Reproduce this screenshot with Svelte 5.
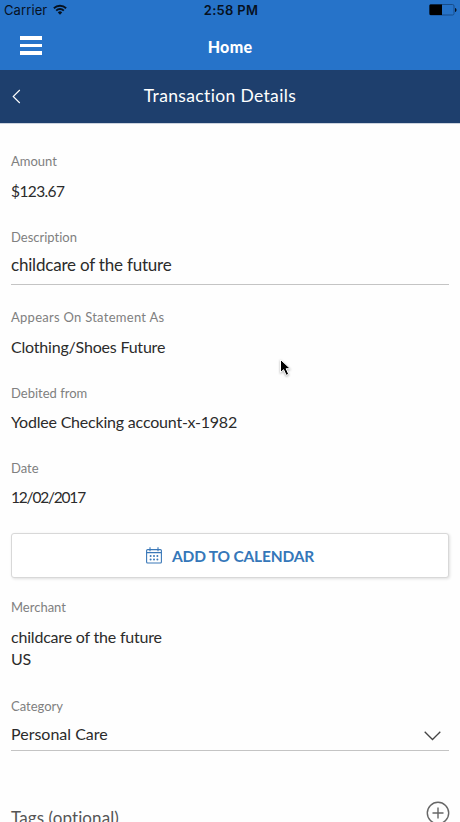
<script lang="ts">
  let description = 'childcare of the future';
  const transaction = {
    amount: '$123.67',
    statementName: 'Clothing/Shoes Future',
    account: 'Yodlee Checking account-x-1982',
    date: '12/02/2017',
    merchant: 'childcare of the future',
    country: 'US',
    category: 'Personal Care'
  };

  const dotRows = [9, 12.4];
  const dotCols = [4.6, 8, 11.4];
</script>

<div class="screen">
  <div class="status-bar">
    <div class="carrier">
      <span>Carrier</span>
      <svg width="14" height="11" viewBox="0 0 14 11" fill="none" stroke="#06111f" stroke-width="1.9">
        <path d="M0.9 4.2a8.7 8.7 0 0 1 12.2 0" />
        <path d="M3.2 6.6a5.4 5.4 0 0 1 7.6 0" />
        <path d="M7 10.7L4.8 8.4a3.1 3.1 0 0 1 4.4 0z" fill="#06111f" stroke="none" />
      </svg>
    </div>
    <span class="clock">2:58 PM</span>
    <svg class="battery" width="28" height="12" viewBox="0 0 28 12">
      <rect x="0.5" y="0.5" width="24.5" height="10.5" rx="1.5" fill="none" stroke="#174d8b" />
      <path d="M1.5 0.5H13V11H1.5a1 1 0 0 1-1-1V1.5a1 1 0 0 1 1-1z" fill="#000" />
      <path d="M26 4v4c1-.3 1.5-1 1.5-2S27 4.3 26 4z" fill="#06111f" />
    </svg>
  </div>

  <header class="nav-bar">
    <button class="menu-btn" aria-label="Menu">
      <span></span>
      <span></span>
      <span></span>
    </button>
    <h1>Home</h1>
  </header>

  <div class="title-bar">
    <button class="back-btn" aria-label="Back">
      <svg width="9" height="15" viewBox="0 0 9 15" fill="none" stroke="#fff" stroke-width="1.1">
        <path d="M7.8 1L1.2 7.5L7.8 14" />
      </svg>
    </button>
    <h2>Transaction Details</h2>
  </div>

  <main class="details">
    <div class="field total">
      <span class="label">Amount</span>
      <span class="value amount">{transaction.amount}</span>
    </div>

    <div class="field editable">
      <span class="label">Description</span>
      <span class="value description">{description}</span>
    </div>

    <div class="field statement">
      <span class="label">Appears On Statement As</span>
      <span class="value">{transaction.statementName}</span>
    </div>

    <div class="field">
      <span class="label">Debited from</span>
      <span class="value">{transaction.account}</span>
    </div>

    <div class="field">
      <span class="label">Date</span>
      <span class="value date">{transaction.date}</span>
    </div>

    <button class="calendar-btn">
      <svg width="16" height="17" viewBox="0 0 16 17" fill="none" stroke="#3a78b8" stroke-width="1.1">
        <rect x="0.6" y="2.6" width="14.8" height="13.4" rx="1" />
        <path d="M0.6 5.6H15.4M4 0.3V4.3M12 0.3V4.3" />
        {#each dotRows as cy}
          {#each dotCols as cx}
            <circle {cx} {cy} r="1" fill="#3a78b8" stroke="none" />
          {/each}
        {/each}
      </svg>
      <span>ADD TO CALENDAR</span>
    </button>

    <div class="field merchant">
      <span class="label">Merchant</span>
      <span class="value">{transaction.merchant}</span>
      <span class="value country">{transaction.country}</span>
    </div>

    <div class="field select">
      <span class="label">Category</span>
      <div class="select-row">
        <span class="value category">{transaction.category}</span>
        <svg width="17" height="10" viewBox="0 0 17 10" fill="none" stroke="#444" stroke-width="1.3">
          <path d="M0.7 0.8L8.5 8.5L16.3 0.8" />
        </svg>
      </div>
    </div>

    <div class="tags">
      <span>Tags (optional)</span>
      <button class="add-btn" aria-label="Add tag">
        <svg width="24" height="24" viewBox="0 0 24 24" fill="none" stroke="#666" stroke-width="1.4">
          <circle cx="12" cy="12" r="10.7" />
          <path d="M12 6.5V17.5M6.5 12H17.5" />
        </svg>
      </button>
    </div>
  </main>

  <svg class="pointer" width="14" height="20" viewBox="0 0 14 20">
    <path d="M1.5 1.5V14.5L4.6 11.7L7.2 17.3L9.7 16.2L7.2 10.7H11.3z" fill="#000" stroke="#fff" />
  </svg>
</div>

<style>
  :global(body) {
    margin: 0;
    background: #fff;
  }

  .screen {
    position: relative;
    width: 460px;
    height: 822px;
    overflow: hidden;
    background: #fefefe;
    color: #2b2b2b;
    font-family: Lato, 'Open Sans', sans-serif;
    font-variant-ligatures: none;
  }

  button {
    padding: 0;
    border: none;
    background: none;
    font-family: inherit;
    cursor: pointer;
  }

  svg {
    display: block;
  }

  .status-bar {
    display: grid;
    grid-template-columns: 1fr auto 1fr;
    align-items: center;
    height: 20px;
    padding: 0 3px 0 4px;
    background: #2673c9;
    color: #06111f;
    font-family: Inter, Roboto, sans-serif;
    font-size: 13px;
  }

  .carrier {
    display: flex;
    align-items: center;
    gap: 6px;
    letter-spacing: 0.1px;
  }

  .carrier svg {
    margin-top: -2px;
  }

  .clock {
    padding-left: 1px;
    font-weight: 600;
    letter-spacing: 0.3px;
  }

  .battery {
    justify-self: end;
  }

  .nav-bar,
  .title-bar {
    display: grid;
    grid-template-columns: 60px 1fr 60px;
    align-items: center;
    color: #fff;
  }

  .nav-bar {
    height: 50px;
    background: #2673c9;
  }

  .title-bar {
    height: 53px;
    background: #1e3f6d;
    border-bottom: 1px solid #ccd3de;
  }

  .menu-btn {
    display: flex;
    flex-direction: column;
    gap: 4px;
    width: 22px;
    margin: 1px 0 0 19.5px;
  }

  .menu-btn span {
    height: 3.5px;
    background: #fff;
  }

  h1,
  h2 {
    margin: 0;
    text-align: center;
  }

  h1 {
    padding-top: 4px;
    font-size: 16px;
    font-weight: 900;
    line-height: 20px;
    letter-spacing: 0.3px;
  }

  h2 {
    margin: -2px 0 0 -20px;
    font-size: 17.5px;
    font-weight: 400;
    line-height: 24px;
    letter-spacing: 0.35px;
  }

  .back-btn {
    width: 9px;
    margin-left: 12px;
  }

  .details {
    padding: 27px 11px 0;
  }

  .field {
    display: flex;
    flex-direction: column;
    gap: 8px;
    margin-bottom: 25px;
  }

  .total,
  .statement {
    gap: 9px;
  }

  .label {
    color: #808080;
    font-size: 13px;
    line-height: 20px;
  }

  .value {
    font-size: 16px;
    line-height: 22px;
    letter-spacing: -0.2px;
  }

  .amount {
    font-size: 15.5px;
    letter-spacing: -0.6px;
  }

  .date {
    font-size: 15.5px;
    letter-spacing: -1.2px;
  }

  .editable {
    gap: 7px;
    margin-bottom: 22px;
    padding-bottom: 8px;
    border-bottom: 1px solid #c4c4c4;
  }

  .description {
    font-size: 17px;
  }

  .statement .label {
    letter-spacing: 0.27px;
  }

  .calendar-btn {
    display: flex;
    align-items: center;
    justify-content: center;
    gap: 10px;
    box-sizing: border-box;
    width: 438px;
    height: 45px;
    border: 1px solid #d8d8d8;
    border-radius: 3px;
    background: #fff;
    box-shadow: 1px 1px 3px rgba(0, 0, 0, 0.12);
    color: #3577b9;
    font-size: 15.5px;
    font-weight: 700;
    letter-spacing: -0.2px;
  }

  .merchant {
    gap: 9px;
    margin: 19px 0 26px;
  }

  .country {
    margin-top: -9px;
  }

  .select {
    gap: 7px;
    margin-bottom: 0;
    padding-bottom: 5px;
    border-bottom: 1px solid #c4c4c4;
  }

  .select-row,
  .tags {
    display: flex;
    align-items: center;
    justify-content: space-between;
  }

  .select-row svg {
    margin: 3px 8px 0 0;
  }

  .category {
    letter-spacing: 0;
  }

  .tags {
    margin: 49px -1px 0 0;
    color: #555;
    font-size: 17px;
    letter-spacing: 0.1px;
  }

  .tags span {
    padding-top: 7px;
  }

  .add-btn {
    margin-bottom: 2px;
  }

  .pointer {
    position: absolute;
    top: 358px;
    left: 279px;
    filter: drop-shadow(0 1px 1px rgba(0, 0, 0, 0.3));
  }
</style>
